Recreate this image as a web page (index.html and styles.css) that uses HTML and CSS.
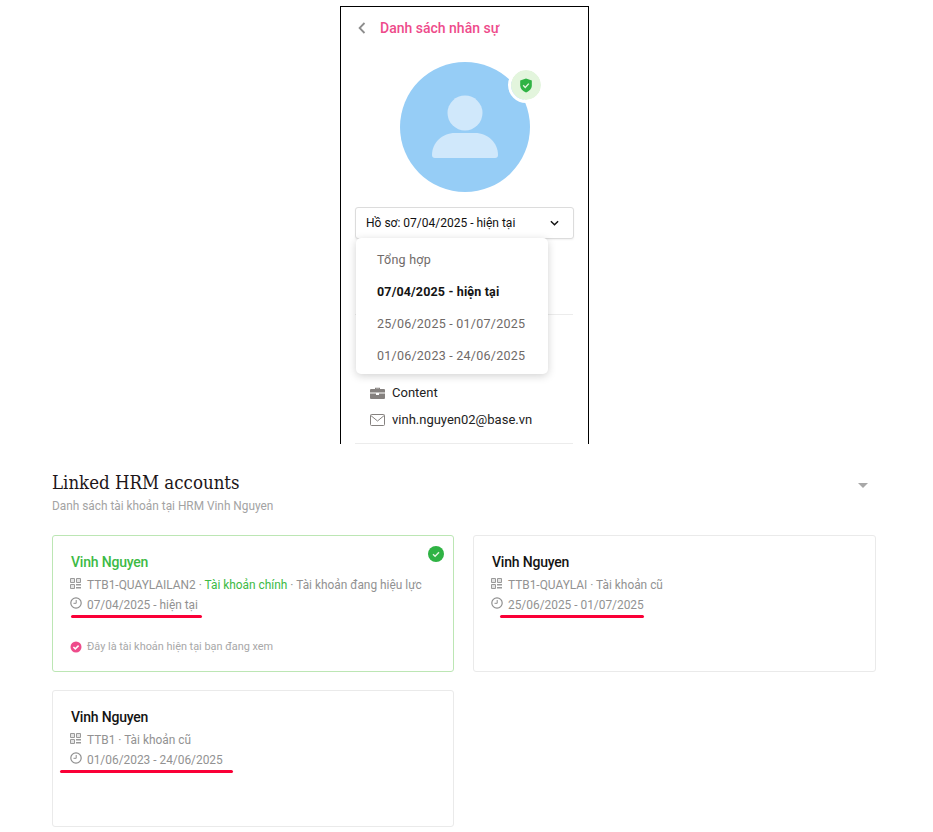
FILE: index.html
```html
<!DOCTYPE html>
<html lang="vi">
<head>
<meta charset="utf-8">
<title>Linked HRM accounts</title>
<link rel="stylesheet" href="styles.css">
</head>
<body>
<section class="panel">
  <header class="back">
    <svg class="back-icon" viewBox="0 0 8 12" width="8" height="12"><path d="M6.5 1 1.600 6l4.900 5" fill="none" stroke="#8d8d8d" stroke-width="1.800"/></svg>
    <span class="back-label">Danh sách nhân sự</span>
  </header>
  <div class="avatar-row">
    <div class="avatar">
      <svg viewBox="0 0 130 130" width="130" height="130">
        <circle cx="65" cy="65" r="65" fill="#96cdf6"/>
        <circle cx="65" cy="51" r="17.500" fill="#d0e8fb"/>
        <path d="M32 93c0-12 10-22 23-22h20c13 0 23 10 23 22 0 2-1 3-3 3H35c-2 0-3-1-3-3z" fill="#d0e8fb"/>
      </svg>
      <span class="badge">
        <svg viewBox="0 0 14 16" width="14" height="15"><path d="M7 .5 13.200 2.600V8c0 3.500-2.700 6-6.200 7.500C3.500 14 .8 11.500.8 8V2.600z" fill="#2fb344"/><path d="m4 7.800 2.200 2.200L10 6" fill="none" stroke="#e4f5df" stroke-width="1.500"/></svg>
      </span>
    </div>
  </div>
  <div class="select">
    <span>Hồ sơ: 07/04/2025 - hiện tại</span>
    <svg viewBox="0 0 10 6" width="9" height="6"><path d="m1 1 4 4 4-4" fill="none" stroke="#111" stroke-width="1.600"/></svg>
  </div>
  <div class="menu">
    <div class="menu-item">Tổng hợp</div>
    <div class="menu-item active">07/04/2025 - hiện tại</div>
    <div class="menu-item">25/06/2025 - 01/07/2025</div>
    <div class="menu-item">01/06/2023 - 24/06/2025</div>
  </div>
  <div class="info">
    <div class="info-row">
      <svg viewBox="0 0 15 12" width="15" height="12"><path d="M5 2V.8h5V2h4a1 1 0 0 1 1 1v2.500H0V3a1 1 0 0 1 1-1zM6 2h3v-.3H6zM0 6.500h6V8h3V6.500h6V11a1 1 0 0 1-1 1H1a1 1 0 0 1-1-1z" fill="#85817f"/></svg>
      <span>Content</span>
    </div>
    <div class="info-row">
      <svg viewBox="0 0 15 12" width="15" height="12"><rect x=".5" y=".5" width="14" height="11" rx="1" fill="none" stroke="#85817f"/><path d="m.8 1.500 6.700 5.500 6.700-5.500" fill="none" stroke="#85817f"/></svg>
      <span>vinh.nguyen02@base.vn</span>
    </div>
  </div>
</section>

<section class="linked">
  <div class="linked-head">
    <div>
      <h2 class="linked-title">Linked HRM accounts</h2>
      <p class="linked-sub">Danh sách tài khoản tại HRM Vinh Nguyen</p>
    </div>
    <span class="caret"></span>
  </div>
  <div class="cards">
    <article class="card card-main">
      <svg class="card-check" viewBox="0 0 16 16" width="16" height="16"><circle cx="8" cy="8" r="8" fill="#2fb344"/><path d="m5 8.200 2.100 2L11 6.300" fill="none" stroke="#e4f5df" stroke-width="1.400"/></svg>
      <h3 class="card-name name-green">Vinh Nguyen</h3>
      <div class="meta">
        <svg class="meta-qr" viewBox="0 0 11 11" width="11" height="11"><path d="M.5.500h4v4h-4zM6.500.500h4v4h-4zM.5 6.500h4v4h-4z" fill="#e4e4e4" stroke="#9a9a9a"/><path d="M6 6h5v1.500H6zM6 9h5v1.500H6z" fill="#9a9a9a"/></svg>
        <span>TTB1-QUAYLAILAN2 · <span class="green">Tài khoản chính</span> · Tài khoản đang hiệu lực</span>
      </div>
      <div class="meta">
        <svg class="meta-clock" viewBox="0 0 12 12" width="12" height="12"><circle cx="6" cy="6" r="5.200" fill="none" stroke="#8f8f8f" stroke-width="1.200"/><path d="M6.200 3v3.300H3.500" fill="none" stroke="#8f8f8f"/></svg>
        <span>07/04/2025 - hiện tại</span>
      </div>
      <span class="mark mark-1"></span>
      <div class="note">
        <svg viewBox="0 0 12 12" width="12" height="12"><circle cx="6" cy="6" r="5.500" fill="#ee4b8b"/><path d="m3.400 6 1.900 1.900 3.300-3.300" fill="none" stroke="#fff" stroke-width="1.500"/></svg>
        <span>Đây là tài khoản hiện tại bạn đang xem</span>
      </div>
    </article>
    <article class="card">
      <h3 class="card-name">Vinh Nguyen</h3>
      <div class="meta">
        <svg class="meta-qr" viewBox="0 0 11 11" width="11" height="11"><path d="M.5.500h4v4h-4zM6.500.500h4v4h-4zM.5 6.500h4v4h-4z" fill="#e4e4e4" stroke="#9a9a9a"/><path d="M6 6h5v1.500H6zM6 9h5v1.500H6z" fill="#9a9a9a"/></svg>
        <span>TTB1-QUAYLAI · Tài khoản cũ</span>
      </div>
      <div class="meta">
        <svg class="meta-clock" viewBox="0 0 12 12" width="12" height="12"><circle cx="6" cy="6" r="5.200" fill="none" stroke="#8f8f8f" stroke-width="1.200"/><path d="M6.200 3v3.300H3.500" fill="none" stroke="#8f8f8f"/></svg>
        <span>25/06/2025 - 01/07/2025</span>
      </div>
      <span class="mark mark-2"></span>
    </article>
    <article class="card">
      <h3 class="card-name">Vinh Nguyen</h3>
      <div class="meta">
        <svg class="meta-qr" viewBox="0 0 11 11" width="11" height="11"><path d="M.5.500h4v4h-4zM6.500.500h4v4h-4zM.5 6.500h4v4h-4z" fill="#e4e4e4" stroke="#9a9a9a"/><path d="M6 6h5v1.500H6zM6 9h5v1.500H6z" fill="#9a9a9a"/></svg>
        <span>TTB1 · Tài khoản cũ</span>
      </div>
      <div class="meta">
        <svg class="meta-clock" viewBox="0 0 12 12" width="12" height="12"><circle cx="6" cy="6" r="5.200" fill="none" stroke="#8f8f8f" stroke-width="1.200"/><path d="M6.200 3v3.300H3.500" fill="none" stroke="#8f8f8f"/></svg>
        <span>01/06/2023 - 24/06/2025</span>
      </div>
      <span class="mark mark-3"></span>
    </article>
  </div>
</section>
</body>
</html>
```
FILE: styles.css
```css
* { box-sizing: border-box; }
html, body { margin: 0; padding: 0; }
body {
  width: 933px;
  height: 832px;
  overflow: hidden;
  background: #fff;
  font-family: Roboto, "Noto Sans", sans-serif;
  color: #111;
  padding-top: 6px;
}
.panel {
  position: relative;
  width: 249px;
  height: 438px;
  margin-left: 340px;
  padding: 0 14px;
  border: 1px solid #000;
  border-bottom: 0;
  overflow: hidden;
}
.back {
  display: flex;
  align-items: center;
  gap: 14px;
  height: 42px;
  padding: 0 0 0 3px;
}
.back-icon { flex: none; }
.back-label { color: #ee4b8b; font-size: 14px; font-weight: 500; }
.avatar-row { display: flex; justify-content: center; padding: 13px 0 15px 1px; }
.avatar { position: relative; width: 130px; height: 130px; }
.avatar svg { display: block; }
.badge {
  position: absolute;
  top: 5px;
  right: -14px;
  width: 36px;
  height: 36px;
  display: flex;
  align-items: center;
  justify-content: center;
  border: 3px solid #fff;
  border-radius: 50%;
  background: #e3f5dd;
  background-clip: padding-box;
}
.select {
  display: flex;
  align-items: center;
  justify-content: space-between;
  width: 219px;
  height: 32px;
  padding: 0 14px 0 10px;
  border: 1px solid #dcdcdc;
  border-radius: 3px;
  background: #fff;
  font-size: 12px;
  box-shadow: 0 1px 2px rgba(0,0,0,.06);
}
.menu {
  position: absolute;
  top: 231px;
  left: 15px;
  z-index: 2;
  width: 192px;
  padding: 5px 0 3px;
  border-radius: 5px;
  background: #fff;
  box-shadow: 0 2px 8px rgba(0,0,0,.18);
}
.menu-item {
  display: flex;
  align-items: center;
  height: 32px;
  padding-left: 21px;
  font-size: 12.500px;
  letter-spacing: .24px;
  color: #6f6a68;
}
.menu-item.active { color: #141414; font-weight: 700; letter-spacing: .15px; }
.info {
  margin-top: 75px;
  padding: 64px 0 0 15px;
  border-top: 1px solid #ececec;
  border-bottom: 1px solid #ececec;
  height: 130px;
  width: 218px;
}
.info-row {
  display: flex;
  align-items: center;
  gap: 7px;
  height: 27px;
  font-size: 13px;
  color: #222;
  white-space: nowrap;
}
.info-row svg { flex: none; }
.linked { padding: 0 58px 0 52px; }
.linked-head {
  display: flex;
  align-items: flex-start;
  justify-content: space-between;
  height: 91px;
  padding: 26px 7px 0 0;
}
.linked-title {
  margin: 0;
  font-family: "DejaVu Serif Condensed", "DejaVu Serif", serif;
  font-size: 18.500px;
  line-height: 26px;
  font-weight: 400;
  color: #1d1619;
}
.linked-sub { margin: 2px 0 0; font-size: 11.850px; line-height: 16px; color: #a3a3a3; }
.caret {
  margin-top: 13px;
  width: 0;
  height: 0;
  border: 5px solid transparent;
  border-top: 5px solid #a8a8a8;
  border-bottom: 0;
}
.cards {
  display: grid;
  grid-template-columns: 402px 403px;
  grid-auto-rows: 137px;
  column-gap: 19px;
  row-gap: 18px;
}
.card {
  position: relative;
  padding: 18px 17px 0;
  border: 1px solid #eaeaea;
  border-radius: 3px;
  background: #fff;
}
.card-main { border-color: #bce6b4; }
.card-check { position: absolute; top: 10px; right: 9px; }
.card-name {
  margin: 0 0 5px;
  padding-left: 1px;
  font-size: 14px;
  letter-spacing: -.2px;
  line-height: 16px;
  font-weight: 500;
  color: #141414;
}
.name-green, .green { color: #3dba45; }
.meta {
  display: flex;
  align-items: center;
  gap: 5px;
  height: 20px;
  font-size: 11.900px;
  color: #929292;
  white-space: nowrap;
}
.meta-qr { flex: none; margin: -4px 1px 0 0; }
.meta-clock { flex: none; margin-top: -4px; }
.note {
  display: flex;
  align-items: center;
  gap: 5px;
  margin-top: 24px;
  font-size: 10.900px;
  line-height: 16px;
  color: #a8a8a8;
}
.mark {
  position: absolute;
  top: 79px;
  height: 3px;
  border-radius: 2px;
  background: #fa0037;
}
.mark-1 { left: 18px; width: 131px; }
.mark-2 { left: 26px; width: 144px; }
.mark-3 { left: 7px; width: 173px; }
```
